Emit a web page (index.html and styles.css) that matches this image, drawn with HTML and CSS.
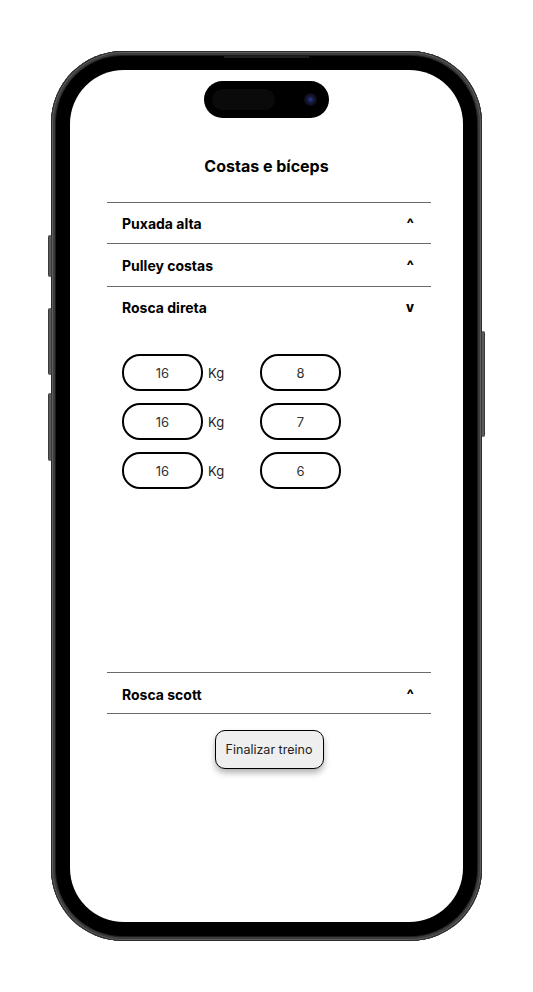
FILE: index.html
```html
<!DOCTYPE html>
<html lang="pt-BR">

<head>
  <meta charset="UTF-8">
  <meta name="viewport" content="width=device-width, initial-scale=1.0">
  <title>Treino</title>
  <link rel="stylesheet" href="styles.css">
</head>

<body>
  <div class="phone">
    <div class="speaker"></div>
    <div class="side-btn mute"></div>
    <div class="side-btn vol-up"></div>
    <div class="side-btn vol-down"></div>
    <div class="side-btn power"></div>

    <div class="screen">
      <div class="island">
        <div class="island-sensor"></div>
        <div class="island-camera"></div>
      </div>

      <div class="title">Costas e bíceps</div>

      <div class="exercises">
        <div class="exercise">
          <div class="exercise-head">
            <span>Puxada alta</span>
            <span class="chevron">^</span>
          </div>
        </div>
        <div class="exercise">
          <div class="exercise-head tall">
            <span>Pulley costas</span>
            <span class="chevron">^</span>
          </div>
        </div>
        <div class="exercise open">
          <div class="exercise-head">
            <span>Rosca direta</span>
            <span class="chevron down">v</span>
          </div>
          <div class="exercise-body">
            <div class="set">
              <div class="pill">16</div>
              <div class="unit">Kg</div>
              <div class="pill">8</div>
            </div>
            <div class="set">
              <div class="pill">16</div>
              <div class="unit">Kg</div>
              <div class="pill">7</div>
            </div>
            <div class="set">
              <div class="pill">16</div>
              <div class="unit">Kg</div>
              <div class="pill">6</div>
            </div>
          </div>
        </div>
        <div class="exercise last">
          <div class="exercise-head">
            <span>Rosca scott</span>
            <span class="chevron">^</span>
          </div>
        </div>

        <div class="actions">
          <button class="finish">Finalizar treino</button>
        </div>
      </div>
    </div>
  </div>
</body>

</html>
```

FILE: styles.css
```css
html,
body {
  margin: 0;
  padding: 0;
  background: #fff;
  font-family: Inter, "Noto Sans", sans-serif;
}

body {
  display: flex;
  justify-content: center;
  padding-top: 51px;
}

.phone {
  position: relative;
  width: 393px;
  height: 852px;
  padding: 19px;
  border-radius: 72px;
  background: #000;
  box-shadow:
    inset 0 0 0 1px #2a2a2a,
    inset 0 0 0 2px #5e5e5e,
    inset 0 0 0 4px #3c3c3c,
    inset 0 0 0 5px #1c1c1c;
}

.speaker {
  position: absolute;
  top: 5px;
  left: 173px;
  width: 85px;
  height: 2px;
  background: #1e1e1e;
}

.side-btn {
  position: absolute;
  width: 4px;
  border-radius: 2px;
  background: linear-gradient(to right, #2a2a2a, #6a6a6a 50%, #2a2a2a);
}

.mute {
  left: -3px;
  top: 184px;
  height: 42px;
}

.vol-up {
  left: -3px;
  top: 257px;
  height: 67px;
}

.vol-down {
  left: -3px;
  top: 342px;
  height: 68px;
}

.power {
  right: -3px;
  top: 280px;
  height: 106px;
}

.screen {
  position: relative;
  height: 100%;
  border-radius: 54px;
  background: #fff;
  overflow: hidden;
}

.island {
  position: absolute;
  top: 11px;
  left: 134px;
  width: 125px;
  height: 37px;
  border-radius: 19px;
  background: #000;
}

.island-sensor {
  position: absolute;
  top: 8px;
  left: 8px;
  width: 63px;
  height: 21px;
  border-radius: 11px;
  background: #0a0a0a;
}

.island-camera {
  position: absolute;
  top: 12px;
  left: 100px;
  width: 13px;
  height: 13px;
  border-radius: 50%;
  background: radial-gradient(circle, #2b3d8a 0, #15193a 35%, #0b0b16 70%);
}

.title {
  padding-top: 86px;
  font-size: 16px;
  line-height: 20px;
  font-weight: 700;
  text-align: center;
  color: #000;
}

.exercises {
  width: 324px;
  margin: 26px 0 0 37px;
}

.exercise {
  border-top: 1px solid #6a6a6a;
}

.exercise.last {
  border-bottom: 1px solid #6a6a6a;
}

.exercise-head {
  display: flex;
  align-items: center;
  justify-content: space-between;
  height: 40px;
  padding: 0 17px 0 15px;
  font-size: 14px;
  font-weight: 700;
  color: #000;
}

.exercise-head.tall {
  height: 42px;
}

.exercise.last .exercise-head {
  height: 40px;
  padding-top: 2px;
  box-sizing: border-box;
}

.chevron {
  font-size: 15px;
  font-weight: 800;
}

.chevron.down {
  font-size: 13px;
}

.exercise-body {
  height: 318px;
  padding: 27px 0 0 15px;
  display: flex;
  flex-direction: column;
  gap: 12px;
}

.set {
  display: grid;
  grid-template-columns: 81px 57px 81px;
  align-items: center;
}

.pill {
  height: 33px;
  border: 2px solid #000;
  border-radius: 18px;
  display: flex;
  align-items: center;
  justify-content: center;
  font-size: 13px;
  color: #333;
}

.unit {
  padding-left: 5px;
  font-size: 13px;
  color: #222;
}

.actions {
  display: flex;
  justify-content: center;
  padding-top: 16px;
}

.finish {
  width: 109px;
  height: 39px;
  border: 1px solid #000;
  border-radius: 10px;
  background: #efefef;
  box-shadow: 0 4px 6px rgba(0, 0, 0, 0.3);
  font-family: Inter, "Noto Sans", sans-serif;
  font-size: 12.5px;
  color: #222;
}
```
